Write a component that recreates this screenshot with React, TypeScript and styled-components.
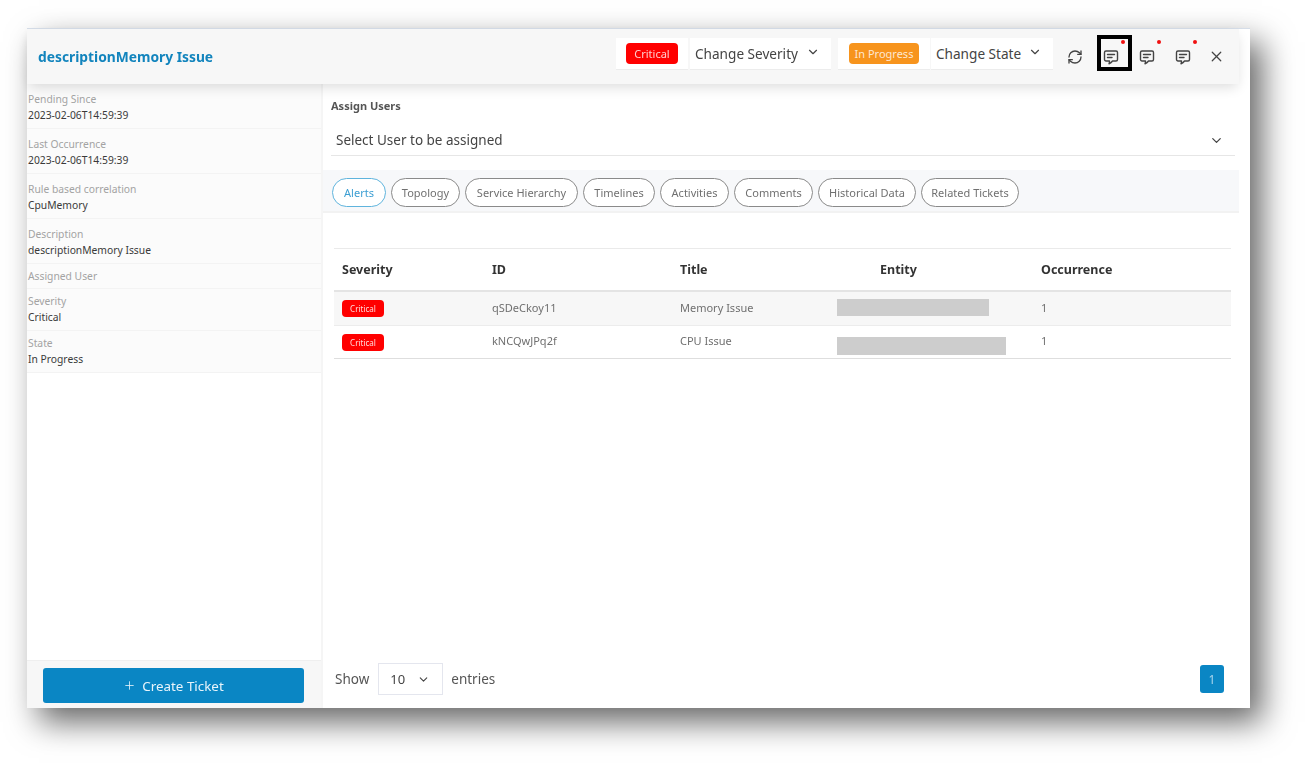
import React from 'react';
import styled, { createGlobalStyle } from 'styled-components';
import { ChevronDown, Plus, RefreshCw, X } from 'lucide-react';

const Global = createGlobalStyle`
  html, body { margin: 0; padding: 0; background: #fff; }
  body { font-family: "Noto Sans", "Open Sans", sans-serif; }
  #root { width: 1305px; height: 763px; overflow: hidden; }
`;

const Page = styled.div`
  padding: 28px 55px 55px 27px;
  width: 1305px;
  height: 763px;
  box-sizing: border-box;
  filter: blur(0.35px);
`;

const Window = styled.div`
  width: 1223px;
  height: 680px;
  background: #fff;
  box-shadow: 12px 14px 30px rgba(0, 0, 0, 0.6);
  border-top: 1px solid #d5dde8;
  box-sizing: border-box;
  padding-right: 11px;
  display: flex;
  flex-direction: column;
`;

const Header = styled.header`
  height: 55px;
  flex: none;
  background: #f7f7f7;
  box-shadow: 0 5px 12px -2px rgba(0, 0, 0, 0.14);
  display: flex;
  align-items: center;
  padding: 0 8px 0 11px;
  position: relative;
  z-index: 2;
`;

const Title = styled.h1`
  margin: 0 auto 0 0;
  font-size: 13.8px;
  line-height: 20px;
  font-weight: 700;
  color: #1284bd;
`;

const Control = styled.div<{ $w: number; $mr?: number }>`
  width: ${(p) => p.$w}px;
  margin-right: ${(p) => p.$mr ?? 0}px;
  height: 32px;
  flex: none;
  margin-top: -6px;
  background: #fff;
  border-bottom: 1px solid #ececec;
  display: flex;
  align-items: center;
  box-sizing: border-box;
`;

const Badge = styled.span<{ $bg: string; $w: number; $ml: number }>`
  width: ${(p) => p.$w}px;
  margin-left: ${(p) => p.$ml}px;
  height: 21px;
  border-radius: 4px;
  background: ${(p) => p.$bg};
  color: rgba(255, 255, 255, 0.8);
  font-size: 11px;
  display: flex;
  align-items: center;
  justify-content: center;
`;

const DropLabel = styled.span`
  font-size: 13.6px;
  color: #444;
  margin-left: 5px;
  white-space: nowrap;
  flex: 1;
`;

const DropChevron = styled(ChevronDown)`
  width: 14px;
  height: 14px;
  color: #444;
  margin: -2px 11px 0 0;
`;

const IconButton = styled.div<{ $w?: number; $framed?: boolean }>`
  width: ${(p) => p.$w ?? 36}px;
  height: 36px;
  flex: none;
  margin-top: -4px;
  padding-top: 4px;
  display: flex;
  align-items: center;
  justify-content: center;
  position: relative;
  color: #444;
  &::after {
    content: ${(p) => (p.$framed ? '""' : 'none')};
    position: absolute;
    left: 4px;
    top: 0;
    width: 35px;
    height: 36px;
    box-sizing: border-box;
    border: 4px solid #000;
  }
`;

const Dot = styled.i`
  position: absolute;
  width: 4px;
  height: 4px;
  border-radius: 50%;
  background: #f01010;
  left: 28px;
  top: 5px;
  z-index: 1;
`;

const Body = styled.div`
  flex: 1;
  min-height: 0;
  display: flex;
`;

const Sidebar = styled.aside`
  width: 296px;
  flex: none;
  display: flex;
  flex-direction: column;
  border-right: 2px solid #f5f5f5;
  box-sizing: border-box;
`;

const InfoRow = styled.div<{ $h: number; $pt: number }>`
  height: ${(p) => p.$h}px;
  box-sizing: border-box;
  background: #fbfbfb;
  border-bottom: 1px solid #f3f3f3;
  padding: ${(p) => p.$pt}px 0 0 1px;
  font-size: 10.3px;
  line-height: 16px;
`;

const InfoLabel = styled.div`
  color: #a3a3a3;
`;

const InfoValue = styled.div`
  color: #3a3a3a;
`;

const SideFooter = styled.div`
  margin-top: auto;
  height: 48px;
  background: #f7f7f7;
  border-top: 1px solid #efefef;
  box-sizing: border-box;
  padding: 7px 17px 6px 16px;
`;

const CreateButton = styled.button`
  width: 100%;
  height: 35px;
  border: 0;
  border-radius: 3px;
  background: #0a86c4;
  color: #e8f4fb;
  font: inherit;
  font-size: 13.4px;
  display: flex;
  align-items: center;
  justify-content: center;
  gap: 6px;
  padding: 0;
`;

const Main = styled.main`
  flex: 1;
  min-width: 0;
  display: flex;
  flex-direction: column;
`;

const Assign = styled.section`
  padding: 15px 4px 0 8px;
`;

const AssignLabel = styled.div`
  font-size: 11px;
  line-height: 14px;
  font-weight: 700;
  color: #555;
`;

const AssignSelect = styled.div`
  margin-top: 12px;
  height: 30px;
  border-bottom: 1px solid #e6e6e6;
  padding: 0 11px 0 5px;
  display: flex;
  align-items: center;
  justify-content: space-between;
  font-size: 13.5px;
  color: #444;
`;

const Tabs = styled.nav`
  margin-top: 14px;
  height: 43px;
  box-sizing: border-box;
  background: #f7f8fa;
  border-bottom: 2px solid #f2f2f2;
  padding: 8px 0 0 9px;
  display: flex;
  gap: 5px;
`;

const Tab = styled.div<{ $active?: boolean; $w: number }>`
  width: ${(p) => p.$w}px;
  height: 29px;
  box-sizing: border-box;
  border-radius: 15px;
  background: #fff;
  border: 1px solid ${(p) => (p.$active ? '#5fb4dd' : '#8a8a8a')};
  color: ${(p) => (p.$active ? '#3d9fd3' : '#707070')};
  font-size: 11px;
  padding-bottom: 1px;
  display: flex;
  align-items: center;
  justify-content: center;
  white-space: nowrap;
`;

const Table = styled.div`
  margin: 35px 8px 0 11px;
  border-top: 1px solid #eaeaea;
`;

const Row = styled.div<{ $h: number; $shade?: boolean; $line: string }>`
  height: ${(p) => p.$h}px;
  box-sizing: border-box;
  display: grid;
  grid-template-columns: 150px 188px 157px 204px 1fr;
  align-items: center;
  padding-left: 8px;
  background: ${(p) => (p.$shade ? '#f7f7f7' : '#fff')};
  border-bottom: ${(p) => p.$line};
`;

const Head = styled.div<{ $pl?: number }>`
  font-size: 12.5px;
  font-weight: 700;
  color: #333;
  padding-left: ${(p) => p.$pl ?? 0}px;
`;

const Cell = styled.div`
  font-size: 11px;
  color: #707070;
  margin-top: -3px;
`;

const SmallBadge = styled.span`
  display: flex;
  align-items: center;
  justify-content: center;
  width: 42px;
  height: 17px;
  border-radius: 4px;
  background: #ff0000;
  color: rgba(255, 255, 255, 0.85);
  font-size: 8px;
`;

const Redacted = styled.div<{ $w: number; $h: number; $shift: number }>`
  width: ${(p) => p.$w}px;
  height: ${(p) => p.$h}px;
  background: #cdcdcd;
  margin-top: ${(p) => p.$shift}px;
`;

const Footer = styled.footer`
  margin-top: auto;
  height: 45px;
  box-sizing: border-box;
  padding: 0 15px 13px 12px;
  display: flex;
  align-items: center;
  font-size: 13.5px;
  color: #555;
`;

const PageSize = styled.div`
  width: 65px;
  height: 32px;
  box-sizing: border-box;
  border: 1px solid #e4e6ee;
  margin: 0 8px 0 9px;
  padding: 0 12px 0 11px;
  display: flex;
  align-items: center;
  justify-content: space-between;
  font-size: 13px;
  color: #444;
`;

const PageButton = styled.div`
  margin-left: auto;
  width: 24px;
  height: 28px;
  border-radius: 3px;
  background: #0a86c4;
  color: #a9d5ec;
  font-size: 12px;
  display: flex;
  align-items: center;
  justify-content: center;
`;

const CommentIcon = () => (
  <svg width="16" height="16" viewBox="0 0 16 16" fill="none" stroke="#444" strokeWidth="1.4" strokeLinejoin="round" strokeLinecap="round">
    <path d="M3 2h10a1.5 1.5 0 0 1 1.5 1.5v7A1.5 1.5 0 0 1 13 12H9.5c-.8 1.2-2 2.2-3.5 2.8.4-.9.5-1.9.5-2.8H3a1.5 1.5 0 0 1-1.5-1.5v-7A1.5 1.5 0 0 1 3 2z" />
    <path d="M4.5 5.5h7M4.5 8.5h4.5" />
  </svg>
);

const info: { label: string; value?: string; h: number; pt: number }[] = [
  { label: 'Pending Since', value: '2023-02-06T14:59:39', h: 45, pt: 7 },
  { label: 'Last Occurrence', value: '2023-02-06T14:59:39', h: 45, pt: 7 },
  { label: 'Rule based correlation', value: 'CpuMemory', h: 45, pt: 7 },
  { label: 'Description', value: 'descriptionMemory Issue', h: 45, pt: 7 },
  { label: 'Assigned User', h: 25, pt: 4 },
  { label: 'Severity', value: 'Critical', h: 42, pt: 4 },
  { label: 'State', value: 'In Progress', h: 42, pt: 4 },
];

const tabs: [string, number][] = [
  ['Alerts', 54],
  ['Topology', 69],
  ['Service Hierarchy', 113],
  ['Timelines', 72],
  ['Activities', 69],
  ['Comments', 79],
  ['Historical Data', 98],
  ['Related Tickets', 98],
];

const rows = [
  { id: 'qSDeCkoy11', title: 'Memory Issue', w: 152, h: 17, shift: -3, shade: true, height: 34, line: '1px solid #ececec' },
  { id: 'kNCQwJPq2f', title: 'CPU Issue', w: 169, h: 18, shift: 7, shade: false, height: 33, line: '1px solid #dedede' },
];

export default function App() {
  return (
    <Page>
      <Global />
      <Window>
        <Header>
          <Title>descriptionMemory Issue</Title>
          <Control $w={72} $mr={2}>
            <Badge $bg="#ff0000" $w={52} $ml={10}>Critical</Badge>
          </Control>
          <Control $w={141} $mr={7}>
            <DropLabel>Change Severity</DropLabel>
            <DropChevron />
          </Control>
          <Control $w={92} $mr={1}>
            <Badge $bg="#f7941d" $w={70} $ml={11}>In Progress</Badge>
          </Control>
          <Control $w={122} $mr={4}>
            <DropLabel>Change State</DropLabel>
            <DropChevron />
          </Control>
          <IconButton><RefreshCw size={16} strokeWidth={2} /></IconButton>
          <IconButton $framed><CommentIcon /><Dot /></IconButton>
          <IconButton><CommentIcon /><Dot /></IconButton>
          <IconButton><CommentIcon /><Dot /></IconButton>
          <IconButton $w={30}><X size={17} strokeWidth={1.7} /></IconButton>
        </Header>
        <Body>
          <Sidebar>
            {info.map((r) => (
              <InfoRow key={r.label} $h={r.h} $pt={r.pt}>
                <InfoLabel>{r.label}</InfoLabel>
                {r.value && <InfoValue>{r.value}</InfoValue>}
              </InfoRow>
            ))}
            <SideFooter>
              <CreateButton><Plus size={13} strokeWidth={1.5} />Create Ticket</CreateButton>
            </SideFooter>
          </Sidebar>
          <Main>
            <Assign>
              <AssignLabel>Assign Users</AssignLabel>
              <AssignSelect>
                Select User to be assigned
                <ChevronDown size={15} />
              </AssignSelect>
            </Assign>
            <Tabs>
              {tabs.map(([t, w], i) => (
                <Tab key={t} $w={w} $active={i === 0}>{t}</Tab>
              ))}
            </Tabs>
            <Table>
              <Row $h={43} $line="2px solid #e4e4e4">
                <Head>Severity</Head>
                <Head>ID</Head>
                <Head>Title</Head>
                <Head $pl={43}>Entity</Head>
                <Head>Occurrence</Head>
              </Row>
              {rows.map((r) => (
                <Row key={r.id} $h={r.height} $shade={r.shade} $line={r.line}>
                  <SmallBadge>Critical</SmallBadge>
                  <Cell>{r.id}</Cell>
                  <Cell>{r.title}</Cell>
                  <Redacted $w={r.w} $h={r.h} $shift={r.shift} />
                  <Cell>1</Cell>
                </Row>
              ))}
            </Table>
            <Footer>
              Show
              <PageSize>10<ChevronDown size={13} /></PageSize>
              entries
              <PageButton>1</PageButton>
            </Footer>
          </Main>
        </Body>
      </Window>
    </Page>
  );
}
